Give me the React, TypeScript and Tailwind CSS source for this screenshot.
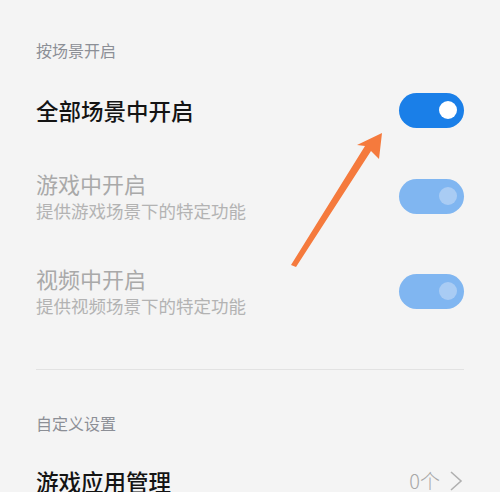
const font = { fontFamily: '"Noto Sans CJK SC", "Noto Sans", sans-serif' }

const Toggle = ({ dim }: { dim?: boolean }) => (
  <div
    className={`flex h-[35px] w-[65px] shrink-0 items-center justify-end rounded-full pr-[7px] ${
      dim ? "bg-[#80b6f1]" : "bg-[#1a7fe8]"
    }`}
  >
    <div className={`h-[18px] w-[18px] rounded-full ${dim ? "bg-[#a9ccf4]" : "bg-white"}`} />
  </div>
)

const SceneRow = ({ title, sub, h }: { title: string; sub: string; h: string }) => (
  <div className={`flex items-center justify-between ${h}`}>
    <div className="flex flex-col">
      <span className="text-[22px] leading-[28px] text-[#a9a9a9]">{title}</span>
      <span className="mt-[2px] text-[17.5px] leading-[24px] text-[#b3b3b3]">{sub}</span>
    </div>
    <Toggle dim />
  </div>
)

export default function App() {
  return (
    <div className="relative h-[492px] w-[500px] overflow-hidden bg-[#f4f4f4]" style={font}>
      <div className="flex flex-col px-[36px] pt-[38px]">
        <span className="text-[16px] leading-[24px] text-[#8c8f96]">按场景开启</span>

        <div className="flex h-[96px] items-center justify-between">
          <span className="text-[22.5px] leading-[28px] font-medium text-[#141414]">全部场景中开启</span>
          <Toggle />
        </div>

        <SceneRow title="游戏中开启" sub="提供游戏场景下的特定功能" h="h-[76px]" />
        <SceneRow title="视频中开启" sub="提供视频场景下的特定功能" h="h-[114px]" />

        <div className="mt-[21px] h-px bg-[#e2e2e2]" />

        <span className="mt-[41px] text-[16px] leading-[24px] text-[#8c8f96]">自定义设置</span>

        <div className="mt-[32px] flex items-center justify-between">
          <span className="text-[22.5px] leading-[28px] font-medium text-[#141414]">游戏应用管理</span>
          <div className="flex items-center gap-[8px]">
            <span className="text-[20px] leading-[28px] font-light text-[#a8a8a8]">0个</span>
            <svg width="16" height="22" viewBox="0 0 16 22" fill="none">
              <polyline points="3,2 13,11 3,20" stroke="#b0b0b0" strokeWidth="1.6" />
            </svg>
          </div>
        </div>
      </div>

      <svg className="pointer-events-none absolute left-0 top-0" width="500" height="492" viewBox="0 0 500 492">
        <polygon
          points="382,133 379,159 371,151 296,267 291,265 365,146 357,145"
          fill="#f57a3d"
        />
      </svg>
    </div>
  )
}
